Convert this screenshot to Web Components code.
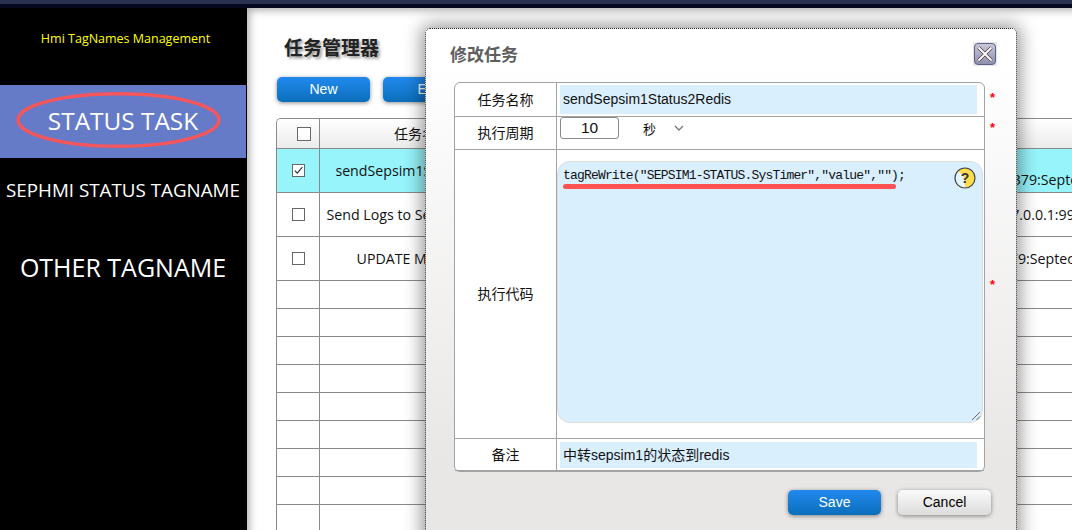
<!DOCTYPE html>
<html lang="zh">
<head>
<meta charset="utf-8">
<title>Hmi TagNames Management</title>
<style>
    html, body { margin: 0; height: 530px; overflow: hidden; background: #fff; }
</style>
</head>
<body>
<app-shell>
    <hmi-sidebar slot="side" heading="Hmi TagNames Management">
        <side-item active lift size="24.4" height="73">STATUS TASK</side-item>
        <side-item size="18.8" height="64">SEPHMI STATUS TAGNAME</side-item>
        <side-item lift size="25" height="92">OTHER TAGNAME</side-item>
    </hmi-sidebar>
    <task-page heading="任务管理器">
        <ui-button slot="actions" kind="primary">New</ui-button>
        <ui-button slot="actions" kind="primary">Edit</ui-button>
        <task-table slot="table">
            <task-row header name="任务名称"></task-row>
            <task-row tall checked name="sendSepsim1Status2Redis" tail="127.0.0.1:6379:Septech" pad="416" drop="18"></task-row>
            <task-row tall name="Send Logs to SepHMI Redis 1" tail="127.0.0.1:9999" pad="470"></task-row>
            <task-row tall name="UPDATE MES Status" tail="127.0.0.1:6379:Septech" pad="405"></task-row>
            <task-row></task-row><task-row></task-row><task-row></task-row>
            <task-row></task-row><task-row></task-row><task-row></task-row>
            <task-row></task-row><task-row></task-row><task-row></task-row>
        </task-table>
    </task-page>
    <task-dialog slot="overlay" heading="修改任务">
        <form-row label="任务名称" height="33" star="8">
            <text-field>sendSepsim1Status2Redis</text-field>
        </form-row>
        <form-row label="执行周期" height="32" star="4">
            <period-field value="10" unit="秒"></period-field>
        </form-row>
        <form-row label="执行代码" height="288" star="128">
            <code-field>tagReWrite("SEPSIM1-STATUS.SysTimer","value","");</code-field>
        </form-row>
        <form-row label="备注" height="31">
            <text-field short>中转sepsim1的状态到redis</text-field>
        </form-row>
        <ui-button slot="footer" kind="primary">Save</ui-button>
        <ui-button slot="footer">Cancel</ui-button>
    </task-dialog>
</app-shell>

<script>
const UI_FONT = '"Open Sans", "Noto Sans CJK SC", sans-serif';
const FORM_FONT = '"Liberation Sans", "Noto Sans CJK SC", sans-serif';

class AppShell extends HTMLElement {
    connectedCallback() {
        this.attachShadow({ mode: 'open' });
        this.shadowRoot.innerHTML = `
            <style>
                :host { display: block; position: relative; width: 1072px; height: 530px; overflow: hidden; }
                .strip-a { height: 4px; background: #2a3150; }
                .strip-b { height: 4px; background: #050a1e; }
                .body { display: flex; height: 522px; }
            </style>
            <div class="strip-a"></div>
            <div class="strip-b"></div>
            <div class="body">
                <slot name="side"></slot>
                <slot></slot>
            </div>
            <slot name="overlay"></slot>
        `;
    }
}

class HmiSidebar extends HTMLElement {
    connectedCallback() {
        this.attachShadow({ mode: 'open' });
        this.shadowRoot.innerHTML = `
            <style>
                :host { display: block; flex: 0 0 246px; width: 246px; background: #000; margin-right: 1px; box-shadow: 1px 0 0 #000; font-family: ${UI_FONT}; }
                .title { height: 77px; padding: 22px 0 0 5px; box-sizing: border-box; text-align: center; color: #ffff00; font-size: 12.5px; line-height: 18px; }
            </style>
            <div class="title">${this.getAttribute('heading')}</div>
            <slot></slot>
        `;
    }
}

class SideItem extends HTMLElement {
    connectedCallback() {
        this.attachShadow({ mode: 'open' });
        const active = this.hasAttribute('active');
        this.shadowRoot.innerHTML = `
            <style>
                :host { display: flex; position: relative; align-items: center; justify-content: center; box-sizing: border-box; height: ${this.getAttribute('height')}px; color: #fff; white-space: nowrap; font-size: ${this.getAttribute('size')}px; }
                :host([lift]) { padding-bottom: 2px; }
                :host([active]) { background: #667bc8; }
                svg { position: absolute; left: 16px; top: 7px; }
            </style>
            <slot></slot>
            ${active ? `<svg width="205" height="56" viewBox="0 0 205 56"><ellipse cx="102.5" cy="28" rx="100.5" ry="26.2" fill="none" stroke="#f4565b" stroke-width="3.4"/></svg>` : ''}
        `;
    }
}

class TaskPage extends HTMLElement {
    connectedCallback() {
        this.attachShadow({ mode: 'open' });
        this.shadowRoot.innerHTML = `
            <style>
                :host { display: block; position: relative; flex: 1; min-width: 0; height: 522px; overflow: hidden; background: #fff; padding: 26px 0 0 29px; box-sizing: border-box; }
                :host::after { content: ""; position: absolute; inset: 0 -20px -20px 0; box-shadow: inset 2px 2px 9px rgba(0,0,0,.35); pointer-events: none; }
                h1 { margin: 0 0 0 8px; height: 26px; font: bold 19px/26px "Noto Sans CJK SC", sans-serif; color: #222; text-shadow: 2px 2px 3px rgba(0,0,0,.45); }
                .actions { display: flex; gap: 13px; margin: 17px 0 0 1px; }
                .table { margin-top: 16px; }
            </style>
            <h1>${this.getAttribute('heading')}</h1>
            <div class="actions"><slot name="actions"></slot></div>
            <div class="table"><slot name="table"></slot></div>
        `;
    }
}

class UiButton extends HTMLElement {
    connectedCallback() {
        this.attachShadow({ mode: 'open' });
        this.shadowRoot.innerHTML = `
            <style>
                :host { display: flex; align-items: center; justify-content: center; box-sizing: border-box; width: 93px; height: 25px; padding-bottom: 1px; border-radius: 5px; font: 14px ${FORM_FONT}; color: #000; background: linear-gradient(#fafafa, #dcdcdc); box-shadow: 0 1px 4px rgba(0,0,0,.45); }
                :host([kind="primary"]) { color: #fff; background: linear-gradient(#2189ee, #0b6fbb); }
            </style>
            <slot></slot>
        `;
    }
}

class UiCheck extends HTMLElement {
    connectedCallback() {
        this.attachShadow({ mode: 'open' });
        this.shadowRoot.innerHTML = `
            <style>
                :host { display: block; width: 11px; height: 11px; border: 1px solid #666; background: #fff; }
                :host([large]) { width: 12px; height: 12px; }
                svg { display: block; }
            </style>
            ${this.hasAttribute('checked') ? `<svg width="11" height="11" viewBox="0 0 11 11"><path d="M1.8 5.6 L4.3 8.2 L9.4 2.2" fill="none" stroke="#333" stroke-width="1.2"/></svg>` : ''}
        `;
    }
}

class TaskTable extends HTMLElement {
    connectedCallback() {
        this.attachShadow({ mode: 'open' });
        this.shadowRoot.innerHTML = `
            <style>
                :host { display: block; width: 820px; border-top: 1px solid #8a8a8a; border-left: 1px solid #8a8a8a; border-top-left-radius: 5px; overflow: hidden; }
            </style>
            <slot></slot>
        `;
    }
}

class TaskRow extends HTMLElement {
    connectedCallback() {
        this.attachShadow({ mode: 'open' });
        const name = this.getAttribute('name') || '';
        const tail = this.getAttribute('tail') || '';
        const pad = this.getAttribute('pad') || 0;
        const drop = this.getAttribute('drop') || 0;
        const header = this.hasAttribute('header');
        const hasBox = header || this.hasAttribute('tall');
        const check = hasBox
            ? `<ui-check ${header ? 'large' : ''} ${this.hasAttribute('checked') ? 'checked' : ''}></ui-check>`
            : '';
        this.shadowRoot.innerHTML = `
            <style>
                :host { display: grid; grid-template-columns: 42px 206px 1fr; height: 28px; box-sizing: border-box; border-bottom: 1px solid #8a8a8a; font: 14.2px ${UI_FONT}; color: #111; white-space: nowrap; }
                :host([tall]) { height: 44px; }
                :host([header]) { height: 30px; background: linear-gradient(#fff, #ececec); font-family: "Noto Sans CJK SC", sans-serif; font-size: 14px; }
                :host([checked]) { background: #96f4fa; }
                .check { display: flex; align-items: center; justify-content: center; border-right: 1px solid #8a8a8a; box-sizing: border-box; width: 43px; }
                :host([header]) .check { padding-left: 12px; }
                .name { display: flex; align-items: center; justify-content: center; overflow: hidden; }
                :host([header]) .name { padding-bottom: 2px; }
                .tail { overflow: hidden; display: flex; align-items: center; }
                .tail span { padding-left: ${pad}px; padding-top: ${drop}px; }
            </style>
            <div class="check">${check}</div>
            <div class="name"><span>${name}</span></div>
            <div class="tail"><span>${tail}</span></div>
        `;
    }
}

class TaskDialog extends HTMLElement {
    connectedCallback() {
        this.attachShadow({ mode: 'open' });
        this.shadowRoot.innerHTML = `
            <style>
                :host { display: block; position: absolute; left: 425px; top: 28px; width: 592px; height: 530px; box-sizing: border-box; border: 1px dotted #222; border-radius: 5px 5px 0 0; background: linear-gradient(#fff 6%, #e9e7e6 82%); box-shadow: 0 0 18px 3px rgba(0,0,0,.42); }
                .head { display: flex; justify-content: space-between; align-items: center; height: 49px; padding: 0 19px 4px 24px; }
                h2 { margin: 0; font: bold 17px "Noto Sans CJK SC", sans-serif; color: #5e5e5e; }
                svg { display: block; }
                .form { margin-left: 28px; width: 531px; box-sizing: border-box; border: 1px solid #a3a3a3; border-radius: 6px; background: #fff; }
                .foot { display: flex; justify-content: flex-end; gap: 17px; margin-top: 18px; padding-right: 25px; }
            </style>
            <div class="head">
                <h2>${this.getAttribute('heading')}</h2>
                <svg width="24" height="24" viewBox="0 0 24 24">
                    <defs><linearGradient id="close-bg" x1="0" y1="0" x2="0" y2="1"><stop offset="0" stop-color="#c8c8da"/><stop offset="1" stop-color="#8f8fae"/></linearGradient></defs>
                    <rect width="24" height="24" fill="#e4e6f0"/>
                    <rect x="1.5" y="1.5" width="21" height="21" rx="3.5" fill="url(#close-bg)" stroke="#62627f"/>
                    <path d="M5.5 5.5 L18.5 18.5 M18.5 5.5 L5.5 18.5" stroke="#4a3038" stroke-width="3.2"/>
                    <path d="M5.5 5.5 L18.5 18.5 M18.5 5.5 L5.5 18.5" stroke="#fff" stroke-width="2"/>
                </svg>
            </div>
            <div class="form"><slot></slot></div>
            <div class="foot"><slot name="footer"></slot></div>
        `;
    }
}

class FormRow extends HTMLElement {
    connectedCallback() {
        this.attachShadow({ mode: 'open' });
        const star = this.getAttribute('star');
        this.shadowRoot.innerHTML = `
            <style>
                :host { display: grid; position: relative; grid-template-columns: 102px 1fr; height: ${this.getAttribute('height')}px; box-sizing: content-box; border-bottom: 1px solid #a3a3a3; }
                :host(:last-child) { border-bottom: 0; }
                .label { display: flex; align-items: center; justify-content: center; padding-bottom: 2px; box-sizing: border-box; border-right: 1px solid #a3a3a3; font: 14px "Noto Sans CJK SC", sans-serif; color: #111; }
                .value { min-width: 0; }
                .star { position: absolute; right: -11px; top: ${star}px; color: #f00; font: bold 13px/13px "Liberation Sans", sans-serif; }
            </style>
            <div class="label">${this.getAttribute('label')}</div>
            <div class="value"><slot></slot></div>
            ${star ? '<span class="star">*</span>' : ''}
        `;
    }
}

class TextField extends HTMLElement {
    connectedCallback() {
        this.attachShadow({ mode: 'open' });
        this.shadowRoot.innerHTML = `
            <style>
                :host { display: flex; align-items: center; height: 29px; margin: 2px 7px 0 3px; padding: 0 0 2px 3px; box-sizing: border-box; background: #d9effd; font: 14px ${FORM_FONT}; color: #111; }
                :host([short]) { height: 26px; margin-top: 3px; }
            </style>
            <slot></slot>
        `;
    }
}

class PeriodField extends HTMLElement {
    connectedCallback() {
        this.attachShadow({ mode: 'open' });
        this.shadowRoot.innerHTML = `
            <style>
                :host { display: flex; align-items: center; height: 22px; padding-left: 3px; font: 15.5px ${FORM_FONT}; color: #111; }
                .num { width: 59px; height: 22px; box-sizing: border-box; border: 1px solid #8a8a8a; border-radius: 3px; text-align: center; line-height: 20px; }
                .unit { margin-left: 24px; font: 13px "Noto Sans CJK SC", sans-serif; }
                svg { margin-left: 18px; }
            </style>
            <div class="num">${this.getAttribute('value')}</div>
            <span class="unit">${this.getAttribute('unit')}</span>
            <svg width="10" height="6" viewBox="0 0 10 6"><path d="M1 1 L5 5 L9 1" fill="none" stroke="#777" stroke-width="1.3"/></svg>
        `;
    }
}

class CodeField extends HTMLElement {
    connectedCallback() {
        this.attachShadow({ mode: 'open' });
        this.shadowRoot.innerHTML = `
            <style>
                :host { display: block; position: relative; height: 262px; margin: 11px 1px 0 0; box-sizing: border-box; padding: 6px 0 0 5px; border: 1px solid #dcdcdc; border-radius: 13px; background: #d9effd; font: 13px/15px "Liberation Mono", monospace; letter-spacing: -0.82px; color: #111; white-space: nowrap; }
                .mark { position: absolute; left: 5px; top: 22px; width: 333px; height: 5px; border-radius: 3px; background: #ff5052; }
                .help { position: absolute; right: 6px; top: 5px; }
                .grip { position: absolute; right: 1px; bottom: 1px; }
                text { font: bold 14px "Liberation Sans", sans-serif; letter-spacing: 0; fill: #333; }
            </style>
            <slot></slot>
            <div class="mark"></div>
            <svg class="help" width="22" height="22" viewBox="0 0 22 22">
                <circle cx="11" cy="11" r="10" fill="#ffdc4e"/>
                <path d="M11 21 A10 10 0 0 1 4 3.9 Q10 8 10.5 12 Q11 16 11 21 Z" fill="#e6f3fb"/>
                <circle cx="11" cy="11" r="10" fill="none" stroke="#444" stroke-width="1.2"/>
                <text x="11" y="16" text-anchor="middle">?</text>
            </svg>
            <svg class="grip" width="10" height="10" viewBox="0 0 10 10"><path d="M1 9 L9 1 M5.5 9 L9 5.5" stroke="#666" stroke-width="1"/></svg>
        `;
    }
}

customElements.define('app-shell', AppShell);
customElements.define('hmi-sidebar', HmiSidebar);
customElements.define('side-item', SideItem);
customElements.define('task-page', TaskPage);
customElements.define('ui-button', UiButton);
customElements.define('ui-check', UiCheck);
customElements.define('task-table', TaskTable);
customElements.define('task-row', TaskRow);
customElements.define('task-dialog', TaskDialog);
customElements.define('form-row', FormRow);
customElements.define('text-field', TextField);
customElements.define('period-field', PeriodField);
customElements.define('code-field', CodeField);
</script>
</body>
</html>
